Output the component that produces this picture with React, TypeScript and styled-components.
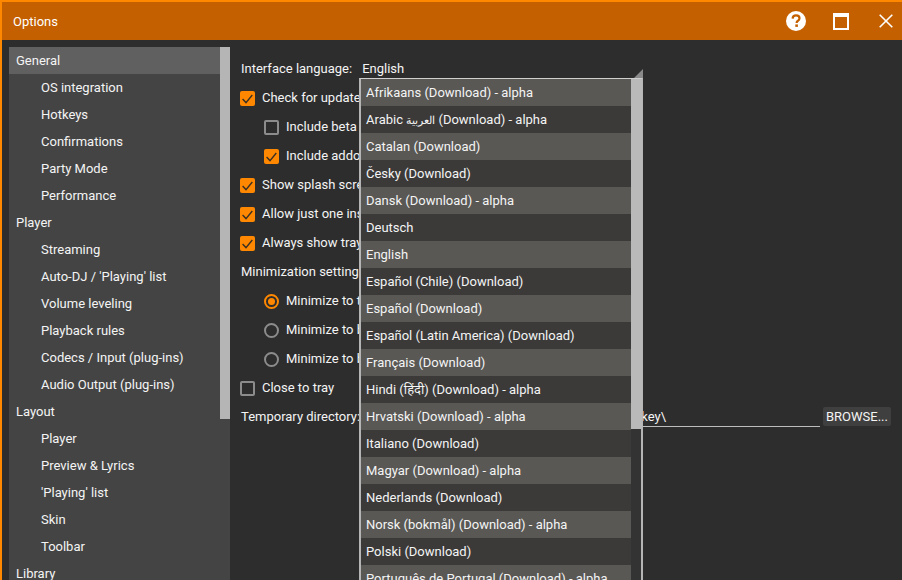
import { createGlobalStyle } from 'styled-components';
import styled from 'styled-components';

const GlobalStyle = createGlobalStyle`
  html, body {
    margin: 0;
    padding: 0;
    background: #2d2d2d;
    overflow: hidden;
  }
`;

const Window = styled.div`
  width: 902px;
  height: 580px;
  box-sizing: border-box;
  position: relative;
  overflow: hidden;
  display: flex;
  flex-direction: column;
  border-top: 2px solid #ff8800;
  border-left: 2px solid #ff8800;
  background: #2d2d2d;
  color: #f4f4f4;
  font-family: Roboto, "Noto Sans", sans-serif;
  font-size: 13px;
`;

const TitleBar = styled.div`
  height: 38px;
  flex: none;
  display: flex;
  align-items: center;
  gap: 13px;
  background: #c46000;
  padding-left: 11px;
`;

const Title = styled.div`
  flex: 1;
  color: #fff;
`;

const TitleButton = styled.button`
  width: 32px;
  height: 38px;
  padding: 0;
  border: none;
  background: none;
  display: flex;
  align-items: center;
  justify-content: center;
`;

const Body = styled.div`
  flex: 1;
  min-height: 0;
  display: flex;
  padding: 7px 0 0 7px;
`;

const Sidebar = styled.div`
  width: 221px;
  flex: none;
  display: flex;
  align-items: flex-start;
  background: #444444;
  overflow: hidden;
`;

const TreeList = styled.div`
  flex: 1;
`;

const TreeItem = styled.div<{ $sub?: boolean; $selected?: boolean }>`
  height: 27px;
  line-height: 27px;
  padding-left: ${(p) => (p.$sub ? 32 : 7)}px;
  background: ${(p) => (p.$selected ? '#606060' : 'transparent')};
  white-space: nowrap;
`;

const SideThumb = styled.div`
  width: 10px;
  height: 372px;
  flex: none;
  background: #b5b5b5;
`;

const Content = styled.div`
  flex: 1;
  min-width: 0;
  padding: 7px 11px 0 10px;
`;

const Row = styled.div<{ $indent?: number }>`
  height: 29px;
  display: flex;
  align-items: center;
  padding-left: ${(p) => p.$indent ?? 0}px;
  white-space: nowrap;
`;

const Label = styled.span`
  padding-left: 1px;
`;

const LanguageValue = styled.span`
  margin-left: 10px;
`;

const CheckBox = styled.span<{ $checked?: boolean }>`
  width: 15px;
  height: 15px;
  box-sizing: border-box;
  flex: none;
  margin: 2px 7px 0 0;
  border-radius: 2px;
  display: flex;
  background: ${(p) => (p.$checked ? '#ff8800' : 'transparent')};
  border: ${(p) => (p.$checked ? 'none' : '2px solid #8c8c8c')};
`;

const Radio = styled.span<{ $checked?: boolean }>`
  width: 15px;
  height: 15px;
  box-sizing: border-box;
  flex: none;
  margin: 2px 7px 0 0;
  border-radius: 50%;
  display: flex;
  align-items: center;
  justify-content: center;
  border: 2px solid ${(p) => (p.$checked ? '#ff8800' : '#8c8c8c')};
  &::after {
    content: '';
    width: 7px;
    height: 7px;
    border-radius: 50%;
    background: ${(p) => (p.$checked ? '#ff8800' : 'transparent')};
  }
`;

const PathField = styled.div`
  flex: 1;
  height: 20px;
  line-height: 19px;
  margin-left: 2px;
  box-sizing: border-box;
  border-bottom: 1px solid #bdbdbd;
  overflow: hidden;
`;

const BrowseButton = styled.button`
  width: 68px;
  height: 19px;
  margin: 0 0 1px 3px;
  padding: 0;
  border: none;
  border-radius: 2px;
  background: #3f3f3f;
  color: #f4f4f4;
  font: inherit;
`;

const Dropdown = styled.div`
  position: absolute;
  left: 357px;
  top: 76px;
  width: 284px;
  height: 520px;
  box-sizing: border-box;
  display: flex;
  border-top: 1px solid #cfcfcf;
  border-left: 2px solid #b5b5b5;
  border-right: 2px solid #b5b5b5;
  background: #333333;
`;

const Grip = styled.div`
  position: absolute;
  left: 632px;
  top: 67px;
  width: 9px;
  height: 9px;
  background: #8a8a8a;
  clip-path: polygon(100% 0, 100% 100%, 0 100%);
`;

const OptionList = styled.div`
  flex: 1;
  min-width: 0;
`;

const Option = styled.div<{ $odd: boolean }>`
  height: 27px;
  line-height: 27px;
  padding-left: 5px;
  white-space: nowrap;
  background: ${(p) => (p.$odd ? '#595855' : '#3b3a39')};
`;

const ArabicName = styled.span`
  font-size: 10.5px;
`;

const DropdownTrack = styled.div`
  width: 10px;
  flex: none;
`;

const DropdownThumb = styled.div`
  height: 350px;
  margin-right: -1px;
  background: #b9b9b9;
`;

const tree: [string, boolean?][] = [
  ['General'],
  ['OS integration', true],
  ['Hotkeys', true],
  ['Confirmations', true],
  ['Party Mode', true],
  ['Performance', true],
  ['Player'],
  ['Streaming', true],
  ["Auto-DJ / 'Playing' list", true],
  ['Volume leveling', true],
  ['Playback rules', true],
  ['Codecs / Input (plug-ins)', true],
  ['Audio Output (plug-ins)', true],
  ['Layout'],
  ['Player', true],
  ['Preview & Lyrics', true],
  ["'Playing' list", true],
  ['Skin', true],
  ['Toolbar', true],
  ['Library'],
];

const languages = [
  'Afrikaans (Download) - alpha',
  <>
    Arabic <ArabicName>العربية</ArabicName> (Download) - alpha
  </>,
  'Catalan (Download)',
  'Česky (Download)',
  'Dansk (Download) - alpha',
  'Deutsch',
  'English',
  'Español (Chile) (Download)',
  'Español (Download)',
  'Español (Latin America) (Download)',
  'Français (Download)',
  'Hindi (हिंदी) (Download) - alpha',
  'Hrvatski (Download) - alpha',
  'Italiano (Download)',
  'Magyar (Download) - alpha',
  'Nederlands (Download)',
  'Norsk (bokmål) (Download) - alpha',
  'Polski (Download)',
  'Português de Portugal (Download) - alpha',
];

const Check = () => (
  <svg width="15" height="15" viewBox="0 0 15 15">
    <path d="M2.6 8 L6 11.6 L12.3 4" fill="none" stroke="#3a3022" strokeWidth="1.4" />
  </svg>
);

const CheckRow = ({ text, checked, indent }: { text: string; checked?: boolean; indent?: number }) => (
  <Row $indent={indent}>
    <CheckBox $checked={checked}>{checked && <Check />}</CheckBox>
    <span>{text}</span>
  </Row>
);

const RadioRow = ({ text, checked }: { text: string; checked?: boolean }) => (
  <Row $indent={24}>
    <Radio $checked={checked} />
    <span>{text}</span>
  </Row>
);

const App = () => {
  return (
    <>
      <GlobalStyle />
      <Window>
        <TitleBar>
          <Title>Options</Title>
          <TitleButton aria-label="Help">
            <svg width="20" height="20" viewBox="0 0 20 20">
              <circle cx="10" cy="10" r="10" fill="#fff" />
              <path
                d="M6.6 7.6 C6.7 5.4 8.2 4.3 10.1 4.3 C12.1 4.3 13.5 5.5 13.5 7.2 C13.5 8.6 12.7 9.3 11.7 10 C10.9 10.6 10.6 11 10.6 12"
                fill="none"
                stroke="#c46000"
                strokeWidth="2.2"
              />
              <rect x="9.3" y="13.4" width="2.6" height="2.5" fill="#c46000" />
            </svg>
          </TitleButton>
          <TitleButton aria-label="Maximize">
            <svg width="16" height="17" viewBox="0 0 16 17">
              <path d="M0 0 H16 V17 H0 Z M2 4 V15 H14 V4 Z" fill="#fff" fillRule="evenodd" />
            </svg>
          </TitleButton>
          <TitleButton aria-label="Close">
            <svg width="14" height="14" viewBox="0 0 14 14">
              <path d="M0.7 0.7 L13.3 13.3 M13.3 0.7 L0.7 13.3" stroke="#fff" strokeWidth="1.6" />
            </svg>
          </TitleButton>
        </TitleBar>
        <Body>
          <Sidebar>
            <TreeList>
              {tree.map(([name, sub], i) => (
                <TreeItem key={i} $sub={sub} $selected={i === 0}>
                  {name}
                </TreeItem>
              ))}
            </TreeList>
            <SideThumb />
          </Sidebar>
          <Content>
            <Row>
              <Label>Interface language:</Label>
              <LanguageValue>English</LanguageValue>
            </Row>
            <CheckRow text="Check for updates at startup" checked />
            <CheckRow text="Include beta versions" indent={24} />
            <CheckRow text="Include addons" checked indent={24} />
            <CheckRow text="Show splash screen" checked />
            <CheckRow text="Allow just one instance" checked />
            <CheckRow text="Always show tray icon" checked />
            <Row>
              <Label>Minimization settings:</Label>
            </Row>
            <RadioRow text="Minimize to tray" checked />
            <RadioRow text="Minimize to both" />
            <RadioRow text="Minimize to bar" />
            <CheckRow text="Close to tray" />
            <Row>
              <Label>Temporary directory:</Label>
              <PathField>C:\Users\User\AppData\Local\Temp\MediaMonkey\</PathField>
              <BrowseButton>BROWSE...</BrowseButton>
            </Row>
          </Content>
        </Body>
        <Grip />
        <Dropdown>
          <OptionList>
            {languages.map((lang, i) => (
              <Option key={i} $odd={i % 2 === 0}>
                {lang}
              </Option>
            ))}
          </OptionList>
          <DropdownTrack>
            <DropdownThumb />
          </DropdownTrack>
        </Dropdown>
      </Window>
    </>
  );
};

export default App;
